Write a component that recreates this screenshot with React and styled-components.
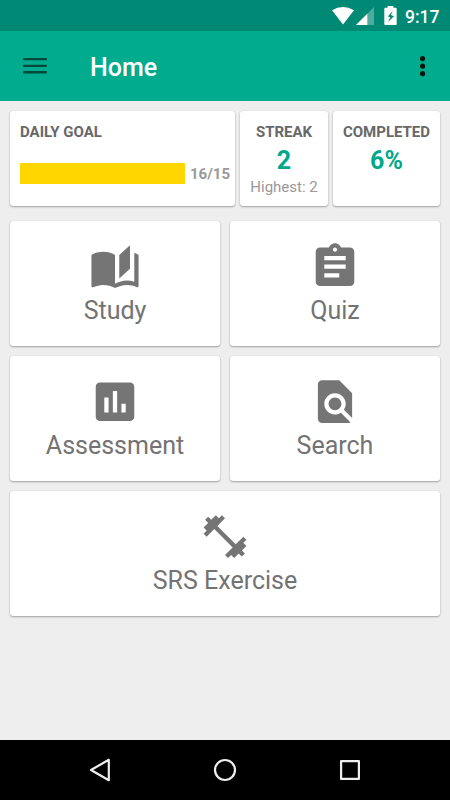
import React from 'react';
import styled, { createGlobalStyle } from 'styled-components';

const GlobalStyle = createGlobalStyle`
  * { box-sizing: border-box; }
  body { margin: 0; background: #eeeeee; font-family: Roboto, sans-serif; }
`;

const Screen = styled.div`
  display: flex;
  flex-direction: column;
  width: 450px;
  height: 800px;
  background: #eeeeee;
  overflow: hidden;
`;

const StatusBar = styled.header`
  display: flex;
  flex: none;
  align-items: center;
  justify-content: flex-end;
  height: 31px;
  padding-right: 10px;
  background: #008975;
  color: #fff;

  svg { display: block; flex: none; }
`;

const Clock = styled.span`
  width: 35px;
  margin-left: 8px;
  padding-top: 2px;
  font-size: 17.5px;
  font-weight: 500;
  line-height: 20px;
  white-space: nowrap;
`;

const Toolbar = styled.div`
  display: flex;
  flex: none;
  align-items: center;
  height: 70px;
  padding: 0 24px 0 23px;
  background: #00ab8e;

  svg { display: block; flex: none; }
`;

const Title = styled.h1`
  flex: 1;
  margin: 4px 0 0 43px;
  color: #fff;
  font-size: 25px;
  font-weight: 500;
  line-height: 30px;
`;

const Content = styled.main`
  display: flex;
  flex: 1;
  flex-direction: column;
  gap: 15px;
  padding: 10px;
`;

const Card = styled.section`
  background: #fff;
  border-radius: 3px;
  box-shadow: 0 1px 2px rgba(0, 0, 0, 0.32), 0 0 1px rgba(0, 0, 0, 0.15);
`;

const Stats = styled.div`
  display: grid;
  grid-template-columns: 225px 88px 107px;
  gap: 5px;
  height: 95px;
`;

const StatCard = styled(Card)`
  display: flex;
  flex-direction: column;
  align-items: ${({ $start }) => ($start ? 'flex-start' : 'center')};
  padding: ${({ $start }) => ($start ? '12px 5px 0 10px' : '12px 0 0')};
  white-space: nowrap;
`;

const StatLabel = styled.h2`
  margin: 0;
  color: #686868;
  font-size: 15px;
  font-weight: 700;
  line-height: 18px;
`;

const StatValue = styled.div`
  margin-top: 5px;
  color: #00a88b;
  font-size: 25px;
  font-weight: 700;
  line-height: 30px;
`;

const StatNote = styled.div`
  margin-top: 2px;
  color: #999;
  font-size: 15px;
  line-height: 18px;
`;

const Goal = styled.div`
  display: flex;
  align-items: center;
  justify-content: space-between;
  width: 100%;
  margin-top: 22px;
`;

const GoalBar = styled.div`
  width: 164.5px;
  height: 21px;
  background: #ffd600;
`;

const GoalCount = styled.span`
  padding-top: 2px;
  color: #999;
  font-size: 15px;
  font-weight: 700;
  line-height: 19px;
`;

const Menu = styled.nav`
  display: grid;
  grid-template-columns: 1fr 1fr;
  gap: 10px;
`;

const MenuCard = styled(Card)`
  display: flex;
  flex-direction: column;
  align-items: center;
  grid-column: ${({ $wide }) => ($wide ? '1 / -1' : 'auto')};
  height: 125px;
  padding-top: 20px;
  color: #757575;

  svg { display: block; width: 52px; height: 52px; }
`;

const MenuLabel = styled.span`
  margin-top: 3px;
  color: #737373;
  font-size: 25px;
  line-height: 30px;
`;

const NavBar = styled.footer`
  display: flex;
  flex: none;
  align-items: center;
  justify-content: center;
  gap: 101px;
  height: 60px;
  background: #000;

  svg { display: block; }
`;

const MENU = [
  {
    label: 'Study',
    path: 'M19 2l-5 4.5v11l5-4.5V2M6.5 5C4.55 5 2.45 5.4 1 6.5v14.66c0 .25.25.5.5.5.1 0 .15-.07.25-.07C3.1 20.94 5.05 20.5 6.5 20.5c1.95 0 4.05.4 5.5 1.5 1.35-.85 3.8-1.5 5.5-1.5 1.65 0 3.35.31 4.75 1.06.1.05.15.03.25.03.25 0 .5-.25.5-.5V6.5c-.6-.45-1.25-.75-2-1V19c-1.1-.35-2.3-.5-3.5-.5-1.7 0-4.15.65-5.5 1.5V6.5C10.55 5.4 8.45 5 6.5 5z',
  },
  {
    label: 'Quiz',
    path: 'M19 3h-4.18C14.4 1.84 13.3 1 12 1c-1.3 0-2.4.84-2.82 2H5c-1.1 0-2 .9-2 2v14c0 1.1.9 2 2 2h14c1.1 0 2-.9 2-2V5c0-1.1-.9-2-2-2zm-7 0c.55 0 1 .45 1 1s-.45 1-1 1-1-.45-1-1 .45-1 1-1zm2 14H7v-2h7v2zm3-4H7v-2h10v2zm0-4H7V7h10v2z',
  },
  {
    label: 'Assessment',
    path: 'M19 3H5c-1.1 0-2 .9-2 2v14c0 1.1.9 2 2 2h14c1.1 0 2-.9 2-2V5c0-1.1-.9-2-2-2zM9 17H7v-7h2v7zm4 0h-2V7h2v10zm4 0h-2v-4h2v4z',
  },
  {
    label: 'Search',
    path: 'M20 19.59V8l-6-6H6c-1.1 0-1.99.9-1.99 2L4 20c0 1.1.89 2 1.99 2H18c.45 0 .85-.15 1.19-.4l-4.43-4.43c-.8.52-1.74.83-2.76.83-2.76 0-5-2.24-5-5s2.24-5 5-5 5 2.24 5 5c0 1.02-.31 1.96-.83 2.75L20 19.59zM9 13c0 1.66 1.34 3 3 3s3-1.34 3-3-1.34-3-3-3-3 1.34-3 3z',
  },
  {
    label: 'SRS Exercise',
    wide: true,
    path: 'M20.57 14.86L22 13.43 20.57 12 17 15.57 8.43 7 12 3.43 10.57 2 9.14 3.43 7.71 2 5.57 4.14 4.14 2.71 2.71 4.14l1.43 1.43L2 7.71l1.43 1.43L2 10.57 3.43 12 7 8.43 15.57 17 12 20.57 13.43 22l1.43-1.43L16.29 22l2.14-2.14 1.43 1.43 1.43-1.43-1.43-1.43L22 16.29z',
  },
];

const StatusIcons = () => (
  <svg width="66" height="31" viewBox="331 0 66 31">
    <path d="M332 10.3Q343 3.7 354 10.3L343 24.5z" fill="#fff" />
    <path d="M374 7v18h-18z" fill="#fff" fillOpacity=".3" />
    <path d="M367.3 13.7V25H356z" fill="#fff" />
    <path
      fillRule="evenodd"
      fill="#fff"
      d="M387.6 6h5.8v1.8h2.3q1 0 1 1v15.1q0 1-1 1h-10.4q-1 0-1-1V8.8q0-1 1-1h2.3zM392.8 10.8l-5 5.6 2.6.9-2.7 4.9 6.3-6-3-1.1z"
    />
  </svg>
);

const MenuIcon = () => (
  <svg width="24" height="16" viewBox="0 0 24 16" fill="#04493d">
    <path d="M.2 0h23.6v2.2H.2zM.2 6.7h23.6v2.2H.2zM.2 13.1h23.6v2.300H.2z" />
  </svg>
);

const MoreIcon = () => (
  <svg width="6" height="22" viewBox="0 0 6 22" fill="#051512">
    <circle cx="2.5" cy="3.6" r="2.6" />
    <circle cx="2.5" cy="11.200" r="2.6" />
    <circle cx="2.5" cy="18.700" r="2.6" />
  </svg>
);

export default function App() {
  return (
    <>
      <GlobalStyle />
      <Screen>
        <StatusBar>
          <StatusIcons />
          <Clock>9:17</Clock>
        </StatusBar>
        <Toolbar>
          <MenuIcon />
          <Title>Home</Title>
          <MoreIcon />
        </Toolbar>
        <Content>
          <Stats>
            <StatCard $start>
              <StatLabel>DAILY GOAL</StatLabel>
              <Goal>
                <GoalBar />
                <GoalCount>16/15</GoalCount>
              </Goal>
            </StatCard>
            <StatCard>
              <StatLabel>STREAK</StatLabel>
              <StatValue>2</StatValue>
              <StatNote>Highest: 2</StatNote>
            </StatCard>
            <StatCard>
              <StatLabel>COMPLETED</StatLabel>
              <StatValue>6%</StatValue>
            </StatCard>
          </Stats>
          <Menu>
            {MENU.map(({ label, path, wide }) => (
              <MenuCard key={label} $wide={wide}>
                <svg viewBox="-0.14 0 24.28 24.28" fill="currentColor">
                  <path d={path} />
                </svg>
                <MenuLabel>{label}</MenuLabel>
              </MenuCard>
            ))}
          </Menu>
        </Content>
        <NavBar>
          <svg width="24" height="24" viewBox="0 0 24 24" fill="none" stroke="#eee" strokeWidth="2.2" strokeLinejoin="round">
            <path d="M20.8 1.8v20.4L3 12z" />
          </svg>
          <svg width="24" height="24" viewBox="0 0 24 24" fill="none" stroke="#eee" strokeWidth="2.2">
            <circle cx="12" cy="12" r="10" />
          </svg>
          <svg width="24" height="24" viewBox="0 0 24 24" fill="none" stroke="#eee" strokeWidth="2.2" strokeLinejoin="round">
            <path d="M3.1 3.1h17.8v17.8H3.1z" />
          </svg>
        </NavBar>
      </Screen>
    </>
  );
}
